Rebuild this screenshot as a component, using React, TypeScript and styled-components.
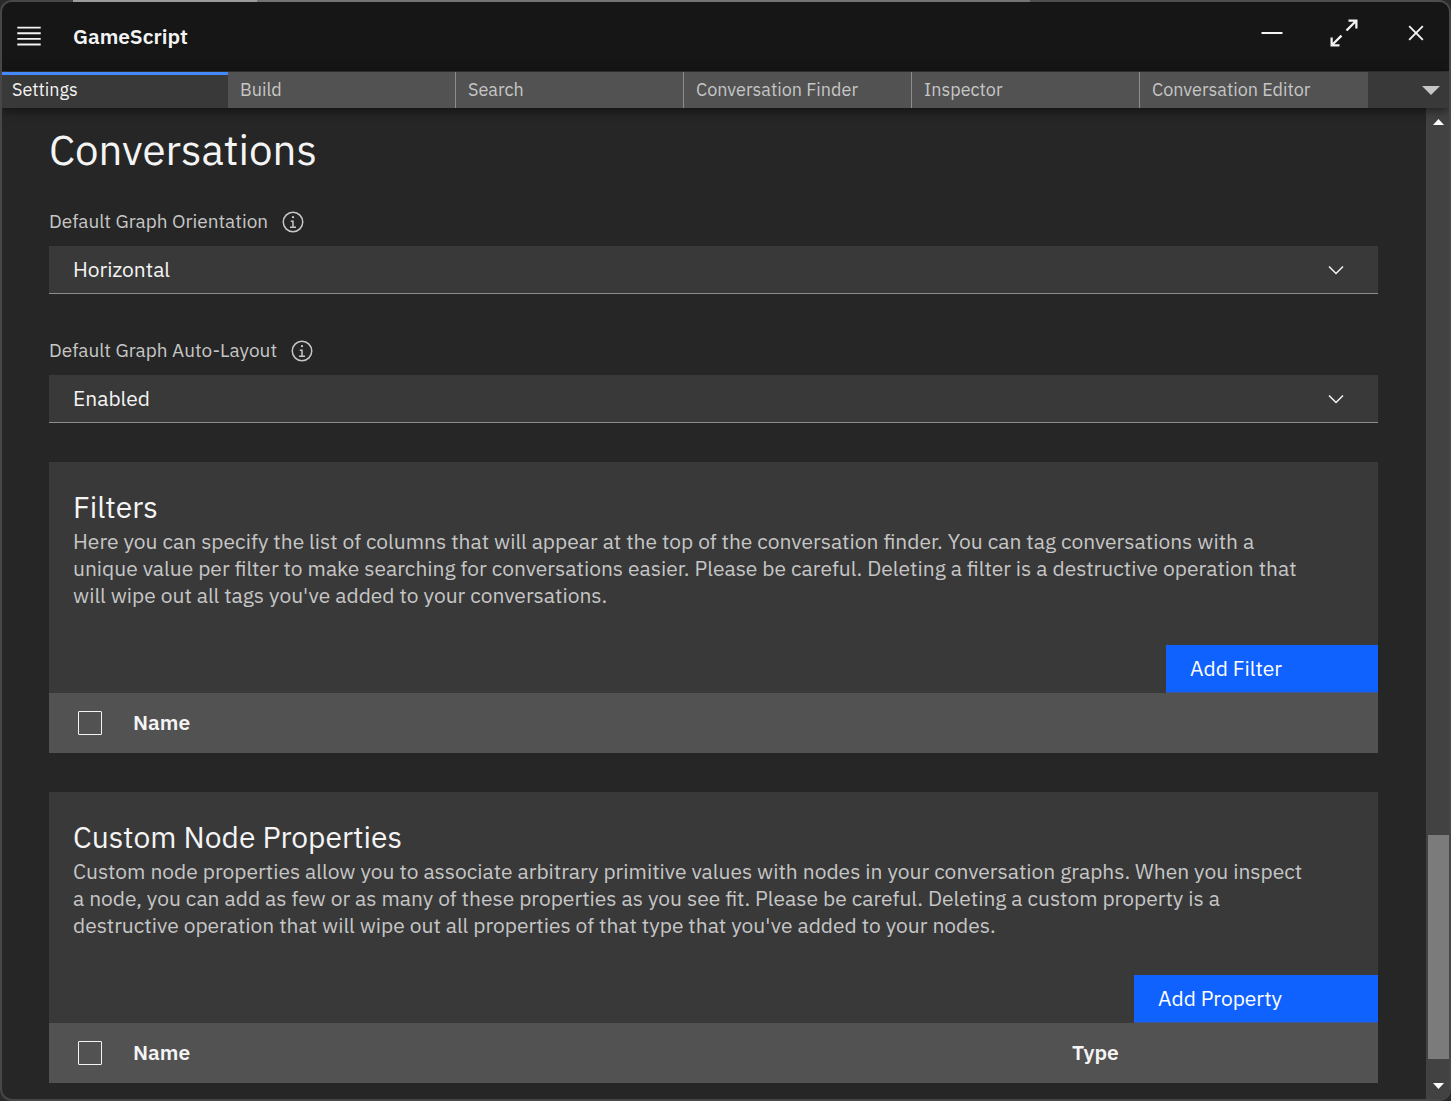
import React from 'react';
import styled, { createGlobalStyle } from 'styled-components';

const GlobalStyle = createGlobalStyle`
  *, *::before, *::after { box-sizing: border-box; }
  html, body, #root { height: 100%; }
  body { margin: 0; background: #2a2a2a; }
  body, button, select, input {
    font-family: 'IBM Plex Sans', 'Noto Sans', sans-serif;
  }
`;

const Frame = styled.div`
  height: 100vh;
  padding: 2px;
  border-radius: 12px;
  background:
    linear-gradient(90deg, #474747 73px, #9c9c9c 73px 257px, #747474 257px 1030px, #4f4f4f 1030px) top / 100% 2px no-repeat,
    #474747;
`;

const Window = styled.div`
  display: flex;
  flex-direction: column;
  height: 100%;
  overflow: hidden;
  border-radius: 10px;
  background: #262626;
  color: #f4f4f4;
`;

const Header = styled.header`
  display: flex;
  align-items: flex-start;
  flex: none;
  height: 70px;
  padding-right: 3px;
  background: #161616;
  border-bottom: 1px solid #393939;
`;

const PlainButton = styled.button`
  display: flex;
  align-items: center;
  justify-content: center;
  padding: 0;
  border: 0;
  background: transparent;
  color: inherit;
`;

const MenuButton = styled(PlainButton)`
  width: 54px;
  height: 68px;
`;

const AppName = styled.h1`
  flex: 1;
  margin: 0 0 0 17px;
  font-size: 21px;
  line-height: 68px;
  font-weight: 600;
`;

const WindowControls = styled.div`
  display: flex;
  gap: 12px;
`;

const ControlButton = styled(PlainButton)`
  width: 60px;
  height: 62px;
`;

const TabBar = styled.nav`
  position: relative;
  z-index: 1;
  display: flex;
  flex: none;
  justify-content: space-between;
  height: 36px;
  background: #393939;
  box-shadow: 0 2px 12px rgba(0, 0, 0, 0.6);
`;

const TabList = styled.div`
  display: flex;
  flex: 0 1 1366px;
  min-width: 0;
`;

const Tab = styled.button<{ $active?: boolean; $divided?: boolean }>`
  flex: 0 1 ${p => (p.$active ? '226px' : '228px')};
  min-width: 0;
  padding: ${p => (p.$active ? '0 10px 3px' : '0 12px')};
  border: 0;
  border-top: ${p => (p.$active ? '3px solid #4589ff' : '0')};
  border-right: ${p => (p.$divided ? '1px solid #8d8d8d' : '0')};
  background: ${p => (p.$active ? '#393939' : '#525252')};
  color: ${p => (p.$active ? '#f4f4f4' : '#c6c6c6')};
  font-size: 18px;
  line-height: ${p => (p.$active ? '30px' : '36px')};
  text-align: left;
  white-space: nowrap;
  overflow: hidden;
`;

const TabMenuButton = styled(PlainButton)`
  width: 36px;
  color: #c6c6c6;
`;

const Body = styled.div`
  display: flex;
  flex: 1;
  min-height: 0;
`;

const Content = styled.main`
  flex: 1;
  min-width: 0;
  padding: 16px 48px 16px 47px;
  overflow-y: auto;
  scrollbar-width: none;
`;

const PageTitle = styled.h2`
  margin: 0 0 34px;
  font-size: 42px;
  line-height: 52px;
  font-weight: 400;
`;

const Fields = styled.div`
  display: grid;
  gap: 45px;
  margin-bottom: 39px;
`;

const Field = styled.div`
  display: grid;
  gap: 12px;
`;

const LabelRow = styled.div`
  display: flex;
  align-items: center;
  gap: 13px;
  height: 24px;
  color: #c6c6c6;
`;

const FieldLabel = styled.label`
  padding-bottom: 2px;
  font-size: 19px;
  line-height: 24px;
`;

const SelectBox = styled.div`
  display: grid;
  grid-template-columns: 1fr 84px;
  align-items: center;
  height: 48px;

  & > svg {
    grid-area: 1 / 2;
    justify-self: center;
    pointer-events: none;
  }
`;

const Select = styled.select`
  grid-area: 1 / 1 / 2 / 3;
  width: 100%;
  height: 48px;
  padding: 0 84px 2px 24px;
  appearance: none;
  border: 0;
  border-bottom: 1px solid #8d8d8d;
  border-radius: 0;
  background: #393939;
  color: #f4f4f4;
  font-size: 21px;
`;

const Cards = styled.div`
  display: grid;
  gap: 39px;
`;

const Card = styled.section`
  display: flex;
  flex-direction: column;
  background: #393939;
`;

const CardText = styled.div`
  padding: 27px 24px 36px;
`;

const CardTitle = styled.h3`
  margin: 0 0 3px;
  font-size: 30px;
  line-height: 36px;
  font-weight: 400;
`;

const CardDescription = styled.p`
  margin: 0;
  padding-right: 45px;
  color: #c6c6c6;
  font-size: 21px;
  line-height: 27px;
`;

const AddButton = styled.button`
  align-self: flex-end;
  height: 48px;
  padding: 0 96px 2px 24px;
  border: 0;
  border-bottom: 1px solid #3d5795;
  background: #0f62fe;
  color: #ffffff;
  font-size: 21px;
`;

const Table = styled.table`
  width: 100%;
  border-collapse: collapse;
  table-layout: fixed;
  background: #525252;
`;

const HeadCell = styled.th<{ $width?: string }>`
  width: ${p => p.$width ?? 'auto'};
  height: 60px;
  padding: 0 0 2px;
  font-size: 21px;
  line-height: 27px;
  font-weight: 600;
  text-align: left;
`;

const CheckCell = styled.th`
  width: 84px;
  height: 60px;
  padding: 0;
`;

const CheckBox = styled.input`
  display: block;
  width: 24px;
  height: 24px;
  margin: 0 0 0 29px;
  appearance: none;
  border: 1px solid #f4f4f4;
  border-radius: 1px;

  &:checked { background: #f4f4f4; }
`;

const ScrollBar = styled.div`
  display: flex;
  flex-direction: column;
  flex: none;
  width: 23px;
  padding-top: 1px;
  background: #424242;
`;

const ScrollArrow = styled(PlainButton)`
  flex: none;
  height: 26px;
  padding-left: 2px;
  color: #ffffff;
`;

const ScrollTrack = styled.div`
  display: flex;
  flex: 1;
  flex-direction: column;
  justify-content: flex-end;
  padding: 0 0 14px 2px;
`;

const ScrollThumb = styled.div`
  height: 224px;
  background: #7b7b7b;
`;

const MenuIcon = () => (
  <svg width="30" height="30" viewBox="0 0 32 32" fill="currentColor" aria-hidden="true">
    <path d="M3.5 6h25v2h-25zM3.5 12h25v2h-25zM3.5 18h25v2h-25zM3.5 24h25v2h-25z" />
  </svg>
);

const MinimizeIcon = () => (
  <svg width="22" height="22" fill="currentColor" aria-hidden="true">
    <path d="M0.5 10h21v2h-21z" />
  </svg>
);

const MaximizeIcon = () => (
  <svg width="36" height="36" viewBox="0 0 32 32" fill="currentColor" aria-hidden="true">
    <path d="M20 4v2h4.586L17.5 13l1.5 1.5 7-7.086V12h2V4zM12 28v-2H7.414L14.5 19 13 17.5 6 24.586V20H4v8z" />
  </svg>
);

const CloseIcon = () => (
  <svg width="30" height="30" viewBox="0 0 32 32" fill="currentColor" aria-hidden="true">
    <path d="M17.414 16 24 9.414 22.586 8 16 14.586 9.414 8 8 9.414 14.586 16 8 22.586 9.414 24 16 17.414 22.586 24 24 22.586z" />
  </svg>
);

const CaretDown = () => (
  <svg width="18" height="9" fill="currentColor" aria-hidden="true">
    <path d="M0 0h18L9 9z" />
  </svg>
);

const InfoIcon = () => (
  <svg width="24" height="24" viewBox="0 0 32 32" fill="currentColor" role="img" aria-label="More information">
    <path d="M17 22v-8h-4v2h2v6h-3v2h8v-2zM16 8a1.5 1.5 0 1 0 1.5 1.5A1.5 1.5 0 0 0 16 8z" />
    <path d="M16 30a14 14 0 1 1 14-14 14 14 0 0 1-14 14zm0-26a12 12 0 1 0 12 12A12 12 0 0 0 16 4z" />
  </svg>
);

const ChevronDown = () => (
  <svg width="24" height="24" viewBox="0 0 16 16" fill="#f4f4f4" aria-hidden="true">
    <path d="M8 11 3 6l.7-.7L8 9.6l4.3-4.3.7.7z" />
  </svg>
);

const ScrollTriangle = ({ down }: { down?: boolean }) => (
  <svg width="11" height="6" fill="currentColor" aria-hidden="true">
    <path d={down ? 'M0 0h11L5.5 6z' : 'M0 6h11L5.5 0z'} />
  </svg>
);

const TABS = ['Settings', 'Build', 'Search', 'Conversation Finder', 'Inspector', 'Conversation Editor'];

const FIELDS = [
  { id: 'orientation', label: 'Default Graph Orientation', options: ['Horizontal', 'Vertical'] },
  { id: 'auto-layout', label: 'Default Graph Auto-Layout', options: ['Enabled', 'Disabled'] },
];

const CARDS = [
  {
    title: 'Filters',
    text: "Here you can specify the list of columns that will appear at the top of the conversation finder. You can tag conversations with a unique value per filter to make searching for conversations easier. Please be careful. Deleting a filter is a destructive operation that will wipe out all tags you've added to your conversations.",
    action: 'Add Filter',
    hasType: false,
  },
  {
    title: 'Custom Node Properties',
    text: "Custom node properties allow you to associate arbitrary primitive values with nodes in your conversation graphs. When you inspect a node, you can add as few or as many of these properties as you see fit. Please be careful. Deleting a custom property is a destructive operation that will wipe out all properties of that type that you've added to your nodes.",
    action: 'Add Property',
    hasType: true,
  },
];

export default function App() {
  return (
    <>
      <GlobalStyle />
      <Frame>
        <Window>
          <Header>
            <MenuButton aria-label="Menu"><MenuIcon /></MenuButton>
            <AppName>GameScript</AppName>
            <WindowControls>
              <ControlButton aria-label="Minimize"><MinimizeIcon /></ControlButton>
              <ControlButton aria-label="Maximize"><MaximizeIcon /></ControlButton>
              <ControlButton aria-label="Close"><CloseIcon /></ControlButton>
            </WindowControls>
          </Header>
          <TabBar>
            <TabList role="tablist">
              {TABS.map((name, i) => (
                <Tab
                  key={name}
                  role="tab"
                  aria-selected={i === 0}
                  $active={i === 0}
                  $divided={i > 0 && i < TABS.length - 1}
                >
                  {name}
                </Tab>
              ))}
            </TabList>
            <TabMenuButton aria-label="All tabs"><CaretDown /></TabMenuButton>
          </TabBar>
          <Body>
            <Content>
              <PageTitle>Conversations</PageTitle>
              <Fields>
                {FIELDS.map(field => (
                  <Field key={field.id}>
                    <LabelRow>
                      <FieldLabel htmlFor={field.id}>{field.label}</FieldLabel>
                      <InfoIcon />
                    </LabelRow>
                    <SelectBox>
                      <Select id={field.id}>
                        {field.options.map(option => <option key={option}>{option}</option>)}
                      </Select>
                      <ChevronDown />
                    </SelectBox>
                  </Field>
                ))}
              </Fields>
              <Cards>
                {CARDS.map(card => (
                  <Card key={card.title}>
                    <CardText>
                      <CardTitle>{card.title}</CardTitle>
                      <CardDescription>{card.text}</CardDescription>
                    </CardText>
                    <AddButton>{card.action}</AddButton>
                    <Table>
                      <thead>
                        <tr>
                          <CheckCell>
                            <CheckBox type="checkbox" aria-label={`Select all: ${card.title}`} />
                          </CheckCell>
                          <HeadCell scope="col">Name</HeadCell>
                          {card.hasType && <HeadCell scope="col" $width="306px">Type</HeadCell>}
                        </tr>
                      </thead>
                    </Table>
                  </Card>
                ))}
              </Cards>
            </Content>
            <ScrollBar>
              <ScrollArrow aria-label="Scroll up"><ScrollTriangle /></ScrollArrow>
              <ScrollTrack><ScrollThumb /></ScrollTrack>
              <ScrollArrow aria-label="Scroll down"><ScrollTriangle down /></ScrollArrow>
            </ScrollBar>
          </Body>
        </Window>
      </Frame>
    </>
  );
}
